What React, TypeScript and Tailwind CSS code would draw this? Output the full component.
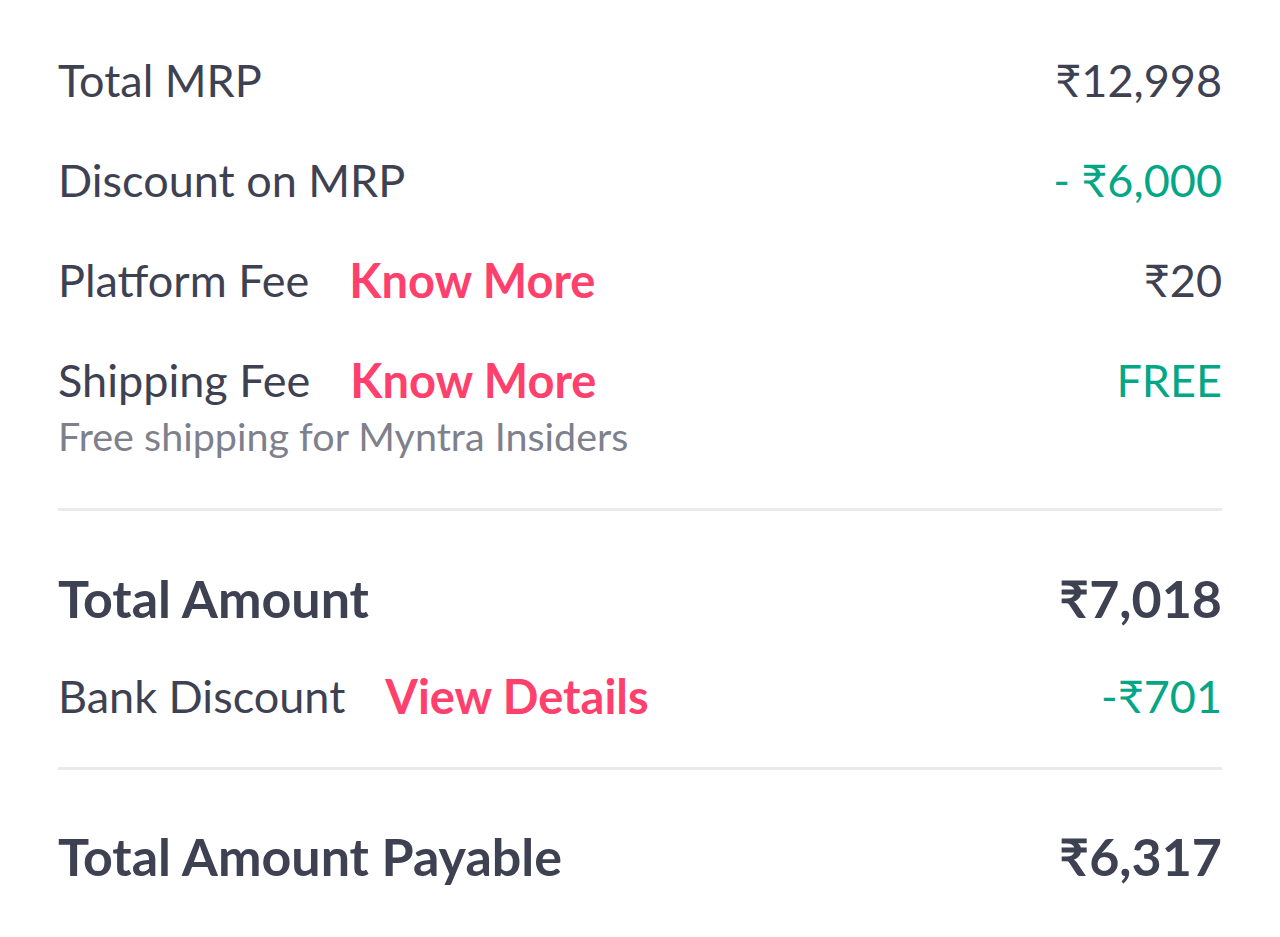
import React from "react";

const font = { fontFamily: "Lato, 'Noto Sans', sans-serif" };

function Row({ label, link, value, valueClass, bold }: { label: string; link?: string; value: string; valueClass?: string; bold?: boolean }) {
  const base = bold ? "font-bold text-[#3e4152] text-[52px]" : "text-[#3e4152] text-[45px]";
  return (
    <div className="flex items-center justify-between h-[60px]">
      <div className="flex items-center">
        <span className={base}>{label}</span>
        {link && <span className="ml-[40px] font-bold text-[#ff3f6c] text-[47px]">{link}</span>}
      </div>
      <span className={valueClass ?? base}>{value}</span>
    </div>
  );
}

export default function App() {
  return (
    <div className="w-[1280px] h-[937px] bg-white px-[58px] pt-[50px] leading-none" style={font}>
      <Row label="Total MRP" value="₹12,998" />
      <div className="mt-[40px]"><Row label="Discount on MRP" value="- ₹6,000" valueClass="text-[#03a685] text-[45px]" /></div>
      <div className="mt-[40px]"><Row label="Platform Fee" link="Know More" value="₹20" /></div>
      <div className="mt-[40px]"><Row label="Shipping Fee" link="Know More" value="FREE" valueClass="text-[#03a685] text-[45px]" /></div>
      <div className="mt-[4px] h-[44px] flex items-center text-[39.5px] text-[#7e818c]">Free shipping for Myntra Insiders</div>
      <div className="mt-[50px] h-[3px] bg-[#eaeaec]" />
      <div className="mt-[57px]"><Row label="Total Amount" value="₹7,018" bold /></div>
      <div className="mt-[38px]"><Row label="Bank Discount" link="View Details" value="-₹701" valueClass="text-[#03a685] text-[45px]" /></div>
      <div className="mt-[41px] h-[3px] bg-[#eaeaec]" />
      <div className="mt-[56px]"><Row label="Total Amount Payable" value="₹6,317" bold /></div>
    </div>
  );
}
